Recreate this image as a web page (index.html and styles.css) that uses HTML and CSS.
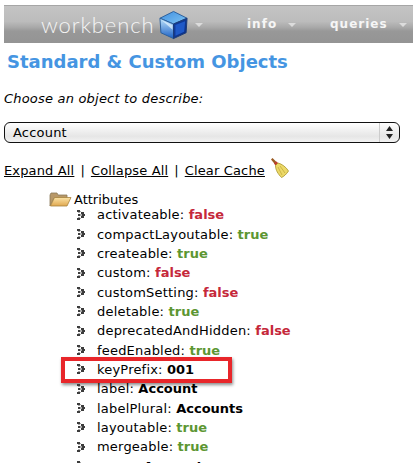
FILE: index.html
```html
<!DOCTYPE html>
<html lang="en">

<head>
    <meta charset="UTF-8">
    <meta name="viewport" content="width=device-width, initial-scale=1.0">
    <title>Workbench</title>
    <link rel="stylesheet" href="styles.css">
</head>

<body>
    <svg class="defs" width="0" height="0">
        <defs>
            <symbol id="bullet" viewBox="0 0 8 10">
                <path d="M0 0h3v2H0zM4 2h3v2H4zM1 4h2v2H1zM5 4h3v2H5zM4 6h3v2H4zM0 8h3v2H0z" fill="#3c3c3c"/>
                <path d="M3 1h1v1H3zM1 2h2v1H1zM3 4h2v2H3zM1 7h2v1H1zM3 8h1v1H3z" fill="#a8a8a8"/>
            </symbol>
        </defs>
    </svg>

    <nav class="menubar">
        <div class="logo">
            <span class="logo-text">workbench</span>
            <svg class="cube" width="31" height="30" viewBox="0 0 32 30">
                <defs>
                    <linearGradient id="cubetop" x1="0" y1="0" x2="1" y2="1">
                        <stop offset="0" stop-color="#3f8fe0"/>
                        <stop offset="1" stop-color="#7fc4f4"/>
                    </linearGradient>
                    <linearGradient id="cubeleft" x1="0" y1="0" x2="0" y2="1">
                        <stop offset="0" stop-color="#bfe4fb"/>
                        <stop offset="1" stop-color="#1a5fc4"/>
                    </linearGradient>
                    <linearGradient id="cuberight" x1="0" y1="0" x2="1" y2="1">
                        <stop offset="0" stop-color="#123f9e"/>
                        <stop offset="1" stop-color="#0c2f86"/>
                    </linearGradient>
                </defs>
                <path d="M16 1L30 8 16 14 2 8Z" fill="url(#cubetop)" stroke="#2a5f9c"/>
                <path d="M2 8L16 14V29L3 23Z" fill="url(#cubeleft)" stroke="#2a5f9c"/>
                <path d="M16 14L30 8 29 23 16 29Z" fill="url(#cuberight)" stroke="#1c3c78"/>
                <path d="M18 15L28 11 27 22 18 26Z" fill="#1f59c8"/>
                <path d="M4 10L15 15V20Z" fill="#e4f4fd" opacity=".7"/>
            </svg>
            <span class="caret"></span>
        </div>
        <div class="menu-item">info <span class="caret"></span></div>
        <div class="menu-item">queries <span class="caret"></span></div>
    </nav>

    <h1 class="title">Standard &amp; Custom Objects</h1>

    <p class="prompt">Choose an object to describe:</p>

    <div class="picker">
        <span class="picker-value">Account</span>
        <span class="picker-arrows">
            <svg width="7" height="13" viewBox="0 0 7 13">
                <path d="M3.5 0L7 5H0ZM0 8H7L3.5 13Z" fill="#222"/>
            </svg>
        </span>
    </div>

    <div class="actions">
        <a href="#">Expand All</a>
        <span class="sep">|</span>
        <a href="#">Collapse All</a>
        <span class="sep">|</span>
        <a href="#">Clear Cache</a>
        <svg class="broom" width="19" height="20" viewBox="0 0 19 20">
            <path d="M1 1.500L2.500 0 7.500 5 5.500 7Z" fill="#9a5a22"/>
            <path d="M4 5.500L6.500 3.500 8.500 5.500 6 8Z" fill="#c23a2a"/>
            <path d="M5.500 7.500L8 5C12 6 16 9 18.500 13 16.500 16 14 18.500 11.500 19.500 8 16 5.500 12 5.500 7.500Z" fill="#ecd968" stroke="#a89428" stroke-width=".8"/>
            <path d="M8 9L12 17M10 8L15 15" stroke="#c4ac3c" stroke-width=".8" fill="none"/>
        </svg>
    </div>

    <div class="tree">
        <div class="tree-head">
            <svg class="folder" width="24" height="15" viewBox="0 0 24 15">
                <defs>
                    <linearGradient id="folderfront" x1="0" y1="0" x2="0" y2="1">
                        <stop offset="0" stop-color="#fbe3a6"/>
                        <stop offset="1" stop-color="#e0a850"/>
                    </linearGradient>
                </defs>
                <path d="M1 14V3L2 1H8L9 3H18V6H5L1 14Z" fill="#b89868" stroke="#8c7a58" stroke-width=".8"/>
                <path d="M1.500 14L5.500 5.500H22L18 14Z" fill="url(#folderfront)" stroke="#a8843e" stroke-width=".8"/>
            </svg>
            <span>Attributes</span>
        </div>
        <ul class="attrs">
            <li><svg class="bullet"><use href="#bullet"/></svg>activateable: <b class="no">false</b></li>
            <li><svg class="bullet"><use href="#bullet"/></svg>compactLayoutable: <b class="yes">true</b></li>
            <li><svg class="bullet"><use href="#bullet"/></svg>createable: <b class="yes">true</b></li>
            <li><svg class="bullet"><use href="#bullet"/></svg>custom: <b class="no">false</b></li>
            <li><svg class="bullet"><use href="#bullet"/></svg>customSetting: <b class="no">false</b></li>
            <li><svg class="bullet"><use href="#bullet"/></svg>deletable: <b class="yes">true</b></li>
            <li><svg class="bullet"><use href="#bullet"/></svg>deprecatedAndHidden: <b class="no">false</b></li>
            <li><svg class="bullet"><use href="#bullet"/></svg>feedEnabled: <b class="yes">true</b></li>
            <li class="marked"><svg class="bullet"><use href="#bullet"/></svg>keyPrefix: <b>001</b></li>
            <li><svg class="bullet"><use href="#bullet"/></svg>label: <b>Account</b></li>
            <li><svg class="bullet"><use href="#bullet"/></svg>labelPlural: <b>Accounts</b></li>
            <li><svg class="bullet"><use href="#bullet"/></svg>layoutable: <b class="yes">true</b></li>
            <li><svg class="bullet"><use href="#bullet"/></svg>mergeable: <b class="yes">true</b></li>
            <li><svg class="bullet"><use href="#bullet"/></svg>name: <b>Account</b></li>
        </ul>
    </div>
</body>

</html>
```

FILE: styles.css
```css
* {
    margin: 0;
    padding: 0;
    box-sizing: border-box;
}

html,
body {
    height: 463px;
    overflow: hidden;
}

body {
    background: #fff;
    color: #000;
    font-family: "DejaVu Sans", Verdana, sans-serif;
    font-size: 13px;
    padding: 5px 0 0 4px;
}

.defs {
    position: absolute;
}

.menubar {
    display: flex;
    align-items: center;
    height: 38px;
    border-top: 1px solid #a6a6a6;
    background: linear-gradient(#c4c4c4 0, #bcbcbc 42%, #a8a8a8 58%, #989898 68%, #949494 100%);
    padding-left: 37px;
}

.logo {
    display: flex;
    align-items: center;
    width: 206px;
}

.logo-text {
    font-family: Lato, sans-serif;
    font-weight: 300;
    font-size: 22px;
    letter-spacing: .9px;
    color: #f4f4f4;
}

.cube {
    margin-left: 4px;
}

.caret {
    display: inline-block;
    width: 0;
    height: 0;
    border-left: 4px solid transparent;
    border-right: 4px solid transparent;
    border-top: 4px solid #dcdcdc;
    margin-left: 6px;
    vertical-align: middle;
}

.menu-item {
    color: #f6f6f6;
    font-size: 12px;
    font-weight: bold;
    letter-spacing: 1px;
    width: 83px;
    margin-top: -1px;
}

.title {
    font-size: 18px;
    font-weight: bold;
    color: #4595e2;
    margin: 8px 0 0 3px;
    line-height: 22px;
}

.prompt {
    font-style: italic;
    margin-top: 18px;
    line-height: 16px;
    letter-spacing: .2px;
}

.picker {
    display: flex;
    align-items: center;
    justify-content: space-between;
    width: 396px;
    height: 21px;
    margin-top: 15px;
    border: 1px solid #111;
    border-radius: 6px;
    background: linear-gradient(#fff 0, #f2f2f2 35%, #e6e6e6 70%, #f2f2f2 100%);
}

.picker-value {
    padding-left: 8px;
    font-size: 13px;
    letter-spacing: .2px;
}

.picker-arrows {
    display: flex;
    align-items: center;
    justify-content: center;
    width: 20px;
    height: 100%;
    border-left: 1px solid #ccc;
}

.actions {
    display: flex;
    align-items: flex-start;
    gap: 6px;
    margin-top: 19px;
    line-height: 17px;
    letter-spacing: .15px;
}

.actions a {
    color: #000;
}

.broom {
    margin: -4px 0 0 -1px;
}

.tree {
    margin: 12px 0 0 45px;
}

.tree-head {
    display: flex;
    align-items: center;
    height: 16px;
}

.folder {
    margin-right: 1px;
}

.attrs {
    list-style: none;
    margin: -2px 0 0 28px;
}

.attrs li {
    position: relative;
    display: flex;
    align-items: center;
    white-space: pre;
    height: 19.35px;
    letter-spacing: .2px;
}

.bullet {
    width: 8px;
    height: 10px;
    margin-right: 12px;
}

.attrs b {
    font-weight: bold;
    letter-spacing: 0;
}

.no {
    color: #c5283a;
}

.yes {
    color: #5c9632;
}

.marked::after {
    content: "";
    position: absolute;
    box-sizing: border-box;
    left: -16px;
    top: -3px;
    width: 171px;
    height: 26px;
    border: 4px solid #e8262a;
    box-shadow: 1px 2px 3px rgba(0, 0, 0, .45);
}
```
